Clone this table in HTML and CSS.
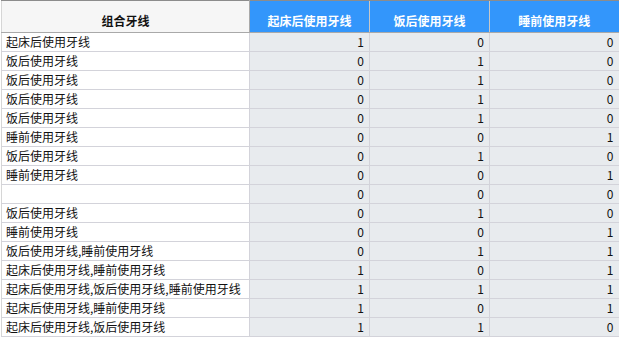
FILE: index.html
```html
<!DOCTYPE html>
<html>
<head>
<meta charset="utf-8">
<link rel="stylesheet" href="styles.css">
</head>
<body>
<table class="grid">
  <colgroup>
    <col class="c-name"><col class="c-num"><col class="c-num"><col class="c-last">
  </colgroup>
  <thead>
    <tr>
      <th class="h-name">组合牙线</th>
      <th class="h-blue">起床后使用牙线</th>
      <th class="h-blue">饭后使用牙线</th>
      <th class="h-blue">睡前使用牙线</th>
    </tr>
  </thead>
  <tbody>
    <tr><td class="name">起床后使用牙线</td><td>1</td><td>0</td><td>0</td></tr>
    <tr><td class="name">饭后使用牙线</td><td>0</td><td>1</td><td>0</td></tr>
    <tr><td class="name">饭后使用牙线</td><td>0</td><td>1</td><td>0</td></tr>
    <tr><td class="name">饭后使用牙线</td><td>0</td><td>1</td><td>0</td></tr>
    <tr><td class="name">饭后使用牙线</td><td>0</td><td>1</td><td>0</td></tr>
    <tr><td class="name">睡前使用牙线</td><td>0</td><td>0</td><td>1</td></tr>
    <tr><td class="name">饭后使用牙线</td><td>0</td><td>1</td><td>0</td></tr>
    <tr><td class="name">睡前使用牙线</td><td>0</td><td>0</td><td>1</td></tr>
    <tr><td class="name"></td><td>0</td><td>0</td><td>0</td></tr>
    <tr><td class="name">饭后使用牙线</td><td>0</td><td>1</td><td>0</td></tr>
    <tr><td class="name">睡前使用牙线</td><td>0</td><td>0</td><td>1</td></tr>
    <tr><td class="name">饭后使用牙线,睡前使用牙线</td><td>0</td><td>1</td><td>1</td></tr>
    <tr><td class="name">起床后使用牙线,睡前使用牙线</td><td>1</td><td>0</td><td>1</td></tr>
    <tr><td class="name">起床后使用牙线,饭后使用牙线,睡前使用牙线</td><td>1</td><td>1</td><td>1</td></tr>
    <tr><td class="name">起床后使用牙线,睡前使用牙线</td><td>1</td><td>0</td><td>1</td></tr>
    <tr><td class="name">起床后使用牙线,饭后使用牙线</td><td>1</td><td>1</td><td>0</td></tr>
  </tbody>
</table>
</body>
</html>
```
FILE: styles.css
```css
html, body {
  margin: 0;
  padding: 0;
  background: #ffffff;
}
body {
  font-family: "Noto Sans CJK SC", "Liberation Sans", sans-serif;
  font-size: 12px;
  color: #111;
}
.grid {
  border-collapse: collapse;
  table-layout: fixed;
  width: 617px;
  margin-left: 1px;
}
.c-name { width: 248px; }
.c-num { width: 120px; }
.c-last { width: 129px; }
.grid th {
  height: 32px;
  box-sizing: border-box;
  padding: 0 4px 3px;
  vertical-align: bottom;
  text-align: center;
  font-weight: bold;
  font-size: 12px;
  line-height: 16px;
  border-top: 1px solid #8c8c8c;
  border-bottom: 1px solid #a9a9a9;
  border-left: 1px solid #c4c4c4;
}
.grid th.h-name {
  background: #f6f6f6;
  color: #111;
  border-left: 1px solid #d6d6d6;
  border-right: 1px solid #a9a9a9;
}
.grid th.h-blue {
  background: #3396fb;
  color: #ffffff;
  border-left: 1px solid #c7c7c7;
}
.grid td {
  height: 19px;
  box-sizing: border-box;
  padding: 0 5px;
  line-height: 16px;
  text-align: right;
  background: #e8ebee;
  border-bottom: 1px solid #d3d3da;
  border-left: 1px solid #d3d3da;
  white-space: nowrap;
  overflow: hidden;
}
.grid td.name {
  text-align: left;
  background: #ffffff;
  padding-left: 4px;
  border-left: 1px solid #d6d6d6;
}
```
